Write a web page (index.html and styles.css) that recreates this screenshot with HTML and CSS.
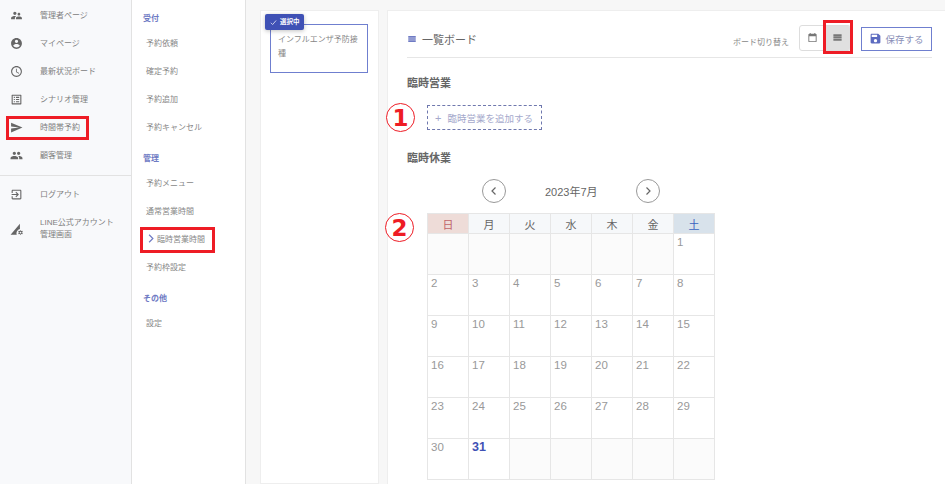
FILE: index.html
```html
<!DOCTYPE html>
<html>
<head>
  <meta charset="utf-8">
  <title>臨時営業時間</title>
  <link rel="stylesheet" href="styles.css">
</head>
<body>
  <div class="sidebar">
    <div class="side-item"><svg class="side-icon" viewBox="0 0 24 24"><path d="M16.5 12c1.38 0 2.49-1.12 2.49-2.5S17.88 7 16.5 7C15.12 7 14 8.12 14 9.5s1.12 2.5 2.5 2.5zM9 11c1.66 0 2.99-1.34 2.99-3S10.66 5 9 5C7.34 5 6 6.34 6 8s1.34 3 3 3zm7.5 3c-1.83 0-5.5.92-5.5 2.75V19h11v-2.25c0-1.83-3.67-2.75-5.5-2.75zM9 13c-2.33 0-7 1.17-7 3.5V19h7v-2.25c0-.85.33-2.34 2.37-3.47C10.5 13.1 9.66 13 9 13z"/></svg>管理者ページ</div>
    <div class="side-item"><svg class="side-icon" viewBox="0 0 24 24"><path d="M12 2C6.48 2 2 6.48 2 12s4.48 10 10 10 10-4.48 10-10S17.52 2 12 2zm0 3c1.66 0 3 1.34 3 3s-1.34 3-3 3-3-1.34-3-3 1.34-3 3-3zm0 14.2c-2.5 0-4.71-1.28-6-3.22.03-1.99 4-3.08 6-3.08 1.99 0 5.97 1.09 6 3.08-1.29 1.94-3.5 3.22-6 3.22z"/></svg>マイページ</div>
    <div class="side-item"><svg class="side-icon" viewBox="0 0 24 24"><path d="M11.99 2C6.47 2 2 6.48 2 12s4.47 10 9.99 10C17.52 22 22 17.52 22 12S17.52 2 11.99 2zM12 20c-4.42 0-8-3.58-8-8s3.58-8 8-8 8 3.58 8 8-3.58 8-8 8zm.5-13H11v6l5.25 3.15.75-1.23-4.5-2.67z"/></svg>最新状況ボード</div>
    <div class="side-item"><svg class="side-icon" viewBox="0 0 24 24"><path d="M19 5v14H5V5h14m1.1-2H3.9c-.5 0-.9.4-.9.9v16.2c0 .4.4.9.9.9h16.2c.4 0 .9-.5.9-.9V3.9c0-.5-.5-.9-.9-.9zM11 7h6v2h-6V7zm0 4h6v2h-6v-2zm0 4h6v2h-6zM7 7h2v2H7zm0 4h2v2H7zm0 4h2v2H7z"/></svg>シナリオ管理</div>
    <div class="side-item"><svg class="side-icon" viewBox="0 0 24 24"><path d="M2.01 21L23 12 2.01 3 2 10l15 2-15 2z"/></svg>時間帯予約</div>
    <div class="side-item"><svg class="side-icon" viewBox="0 0 24 24"><path d="M16 11c1.66 0 2.99-1.34 2.99-3S17.66 5 16 5c-1.66 0-3 1.34-3 3s1.34 3 3 3zm-8 0c1.66 0 2.99-1.34 2.99-3S9.66 5 8 5C6.34 5 5 6.34 5 8s1.34 3 3 3zm0 2c-2.33 0-7 1.17-7 3.5V19h14v-2.5c0-2.33-4.67-3.5-7-3.5zm8 0c-.29 0-.62.02-.97.05 1.16.84 1.97 1.97 1.97 3.45V19h6v-2.5c0-2.33-4.67-3.5-7-3.5z"/></svg>顧客管理</div>
    <div class="side-rule"></div>
    <div class="side-item"><svg class="side-icon" viewBox="0 0 24 24"><path d="M10.09 15.59L11.5 17l5-5-5-5-1.41 1.41L12.67 11H3v2h9.67l-2.58 2.59zM19 3H5c-1.11 0-2 .9-2 2v4h2V5h14v14H5v-4H3v4c0 1.1.89 2 2 2h14c1.1 0 2-.9 2-2V5c0-1.1-.9-2-2-2z"/></svg>ログアウト</div>
    <div class="side-item side-item-tall"><svg class="side-icon side-icon-line" viewBox="0 0 24 24"><path d="M1 22L17 3v9a7.5 7.5 0 0 0-5.5 10z"/><path fill-rule="evenodd" d="M18 13.5l1 1.8 2-.4.9 1.8-1.3 1.3 1.3 1.3-.9 1.8-2-.4-1 1.8-1-1.8-2 .4-.9-1.8 1.3-1.3-1.3-1.3.9-1.8 2 .4zM18 16.5a1.5 1.5 0 1 0 0 3 1.5 1.5 0 0 0 0-3z"/></svg><span>LINE公式アカウント<br>管理画面</span></div>
    <div class="mark mark-side"></div>
  </div>

  <div class="subnav">
    <div class="sub-head">受付</div>
    <div class="sub-item">予約依頼</div>
    <div class="sub-item">確定予約</div>
    <div class="sub-item">予約追加</div>
    <div class="sub-item">予約キャンセル</div>
    <div class="sub-head">管理</div>
    <div class="sub-item">予約メニュー</div>
    <div class="sub-item">通常営業時間</div>
    <div class="sub-item sub-current"><svg class="sub-arrow" viewBox="0 0 8 12"><path d="M1.5 1l5 5-5 5"/></svg>臨時営業時間</div>
    <div class="sub-item">予約枠設定</div>
    <div class="sub-head">その他</div>
    <div class="sub-item">設定</div>
    <div class="mark mark-sub"></div>
  </div>

  <div class="list-panel">
    <div class="scenario">
      インフルエンザ予防接種
      <div class="badge"><svg class="badge-check" viewBox="0 0 12 12"><path d="M1.5 6.5l3 3 6-7"/></svg>選択中</div>
    </div>
  </div>

  <div class="main-panel">
    <div class="board-head">
      <svg class="title-icon" viewBox="0 0 24 24"><path d="M3 5h18v4H3zM3 10h18v4H3zM3 15h18v4H3z"/></svg>
      <div class="board-title">一覧ボード</div>
      <div class="switch-label">ボード切り替え</div>
      <div class="switch">
        <div class="switch-btn"><svg class="switch-icon" viewBox="0 0 24 24"><path d="M19 4h-1V2h-2v2H8V2H6v2H5a2 2 0 0 0-2 2v14a2 2 0 0 0 2 2h14a2 2 0 0 0 2-2V6a2 2 0 0 0-2-2zm0 16H5V9h14v11z"/></svg></div>
        <div class="switch-btn switch-on"><svg class="switch-icon" viewBox="0 0 24 24"><path d="M3 5h18v4H3zM3 10h18v4H3zM3 15h18v4H3z"/></svg></div>
      </div>
      <div class="save-btn"><svg class="save-icon" viewBox="0 0 24 24"><path d="M17 3H5c-1.11 0-2 .9-2 2v14c0 1.1.89 2 2 2h14c1.1 0 2-.9 2-2V7l-4-4zm-5 16c-1.66 0-3-1.34-3-3s1.34-3 3-3 3 1.34 3 3-1.34 3-3 3zm3-10H5V5h10v4z"/></svg>保存する</div>
      <div class="mark mark-switch"></div>
    </div>

    <h2 class="section-title">臨時営業</h2>
    <div class="add-row">
      <div class="num-mark num-one">1</div>
      <div class="add-btn"><span class="add-plus">+</span>臨時営業を追加する</div>
    </div>

    <h2 class="section-title section-off">臨時休業</h2>
    <div class="month-nav">
      <div class="month-btn"><svg viewBox="0 0 8 12"><path d="M5.5 2.5L2 6l3.5 3.5"/></svg></div>
      <div class="month-label">2023年7月</div>
      <div class="month-btn"><svg viewBox="0 0 8 12"><path d="M2.5 2.5L6 6 2.5 9.5"/></svg></div>
    </div>

    <div class="cal-wrap">
      <div class="num-mark num-two">2</div>
      <div class="cal">
        <div class="cal-head cal-sun">日</div>
        <div class="cal-head">月</div>
        <div class="cal-head">火</div>
        <div class="cal-head">水</div>
        <div class="cal-head">木</div>
        <div class="cal-head">金</div>
        <div class="cal-head cal-sat">土</div>

        <div class="day day-empty"></div>
        <div class="day day-empty"></div>
        <div class="day day-empty"></div>
        <div class="day day-empty"></div>
        <div class="day day-empty"></div>
        <div class="day day-empty"></div>
        <div class="day">1</div>

        <div class="day">2</div><div class="day">3</div><div class="day">4</div><div class="day">5</div><div class="day">6</div><div class="day">7</div><div class="day">8</div>
        <div class="day">9</div><div class="day">10</div><div class="day">11</div><div class="day">12</div><div class="day">13</div><div class="day">14</div><div class="day">15</div>
        <div class="day">16</div><div class="day">17</div><div class="day">18</div><div class="day">19</div><div class="day">20</div><div class="day">21</div><div class="day">22</div>
        <div class="day">23</div><div class="day">24</div><div class="day">25</div><div class="day">26</div><div class="day">27</div><div class="day">28</div><div class="day">29</div>

        <div class="day">30</div>
        <div class="day day-today">31</div>
        <div class="day day-empty"></div>
        <div class="day day-empty"></div>
        <div class="day day-empty"></div>
        <div class="day day-empty"></div>
        <div class="day day-empty"></div>
      </div>
    </div>
  </div>
</body>
</html>
```

FILE: styles.css
```css
* {
  margin: 0;
  padding: 0;
  box-sizing: border-box;
}

body {
  font-family: 'Liberation Sans', 'Noto Sans CJK JP', sans-serif;
  background: #f7f7f7;
  width: 945px;
  height: 484px;
  overflow: hidden;
  display: flex;
  color: #777;
}

.sidebar {
  position: relative;
  width: 132px;
  height: 484px;
  background: #f8f9fb;
  border-right: 1px solid #e2e2e2;
}

.side-item {
  height: 28px;
  display: flex;
  align-items: center;
  gap: 17px;
  padding-left: 10px;
  font-size: 8px;
  color: #808080;
}

.side-item-tall {
  height: 44px;
  line-height: 12px;
}

.side-icon {
  width: 13px;
  height: 13px;
  margin-top: 2px;
  fill: #666;
  flex-shrink: 0;
}

.side-icon-line {
  width: 14px;
  height: 14px;
  margin-top: 0;
  margin-right: -1px;
}

.side-rule {
  height: 1px;
  margin: 7px 0 3px;
  background: #e2e2e2;
}

.mark {
  position: absolute;
  border: 3px solid #ee1c25;
}

.mark-side {
  left: 6px;
  top: 116px;
  width: 83px;
  height: 24px;
}

.mark-sub {
  left: 8px;
  top: 227px;
  width: 75px;
  height: 26px;
}

.mark-switch {
  left: 435px;
  top: 9px;
  width: 30px;
  height: 34px;
}

.subnav {
  position: relative;
  width: 114px;
  height: 484px;
  padding: 3px 0 0 11px;
  background: #fff;
  border-right: 1px solid #e2e2e2;
}

.sub-head {
  height: 28px;
  display: flex;
  align-items: center;
  font-size: 8px;
  font-weight: bold;
  color: #6f7bc4;
}

.sub-item {
  height: 28px;
  display: flex;
  align-items: center;
  padding-left: 3px;
  font-size: 8px;
  color: #888;
}

.sub-item + .sub-head {
  margin-top: 3px;
}

.sub-head + .sub-item {
  margin-top: -3px;
}

.sub-current {
  padding-left: 5px;
}

.sub-arrow {
  width: 6px;
  height: 9px;
  margin-right: 3px;
  fill: none;
  stroke: #6f7bc4;
  stroke-width: 1.6;
}

.list-panel {
  width: 119px;
  height: 474px;
  margin: 10px 0 0 14px;
  padding: 13px 9px;
  background: #fff;
  border: 1px solid #eee;
}

.scenario {
  position: relative;
  width: 98px;
  height: 49px;
  padding: 8px 7px;
  border: 1px solid #6f7fcf;
  font-size: 8px;
  line-height: 14px;
  color: #888;
}

.badge {
  position: absolute;
  left: -6px;
  top: -11px;
  width: 39px;
  height: 16px;
  display: flex;
  align-items: center;
  gap: 3px;
  padding-left: 5px;
  background: #3f51b5;
  border-radius: 2px;
  box-shadow: 0 1px 4px rgba(0,0,0,0.25);
  font-size: 6.5px;
  font-weight: bold;
  color: #fff;
}

.badge-check {
  width: 7px;
  height: 7px;
  fill: none;
  stroke: #fff;
  stroke-width: 1.2;
}

.main-panel {
  position: relative;
  width: 558px;
  height: 474px;
  margin: 10px 0 0 8px;
  padding: 0 13px 0 19px;
  background: #fff;
  border-left: 1px solid #eee;
  border-top: 1px solid #eee;
}

.board-head {
  height: 47px;
  display: flex;
  align-items: center;
  padding-top: 7px;
  border-bottom: 1px solid #e6e6e6;
}

.title-icon {
  width: 10px;
  height: 10px;
  margin: 3px 5px 0 0;
  fill: #6f7bc4;
}

.board-title {
  flex: 1;
  margin-top: 3px;
  font-size: 11px;
  color: #666;
}

.switch-label {
  margin: 8px 10px 0 0;
  font-size: 8px;
  color: #888;
}

.switch {
  display: flex;
  width: 52px;
  height: 26px;
  margin-right: 10px;
  border: 1px solid #ddd;
  border-radius: 3px;
  overflow: hidden;
}

.switch-btn {
  flex: 1;
  display: flex;
  align-items: center;
  justify-content: center;
}

.switch-on {
  background: #e0e0e0;
}

.switch-icon {
  width: 11px;
  height: 11px;
  fill: #777;
}

.save-btn {
  width: 71px;
  height: 24px;
  margin-top: 2px;
  display: flex;
  align-items: center;
  justify-content: center;
  gap: 3px;
  border: 1px solid #6f7fcf;
  font-size: 9.5px;
  color: #8a8fb8;
}

.save-icon {
  width: 13px;
  height: 13px;
  fill: #5c6bc0;
}

.section-title {
  margin-top: 17px;
  height: 16px;
  line-height: 16px;
  font-size: 11px;
  font-weight: bold;
  color: #666;
}

.section-off {
  margin-top: 20px;
}

.add-row {
  position: relative;
  padding: 14px 0 0 20px;
}

.add-btn {
  width: 115px;
  height: 25px;
  display: flex;
  align-items: center;
  padding-left: 7px;
  border: 1px dashed #6f78ae;
  font-size: 9.5px;
  color: #a5a9cc;
}

.add-plus {
  margin-right: 6px;
  font-size: 11px;
}

.num-mark {
  position: absolute;
  width: 29px;
  height: 29px;
  display: flex;
  align-items: center;
  justify-content: center;
  background: #fff;
  border: 1px solid #ee1c25;
  border-radius: 50%;
  font-family: 'DejaVu Sans', sans-serif;
  font-size: 23px;
  font-weight: bold;
  color: #ee1c25;
}

.num-one {
  left: -21px;
  top: 12px;
}

.num-two {
  left: -42px;
  top: 0;
}

.month-nav {
  display: flex;
  align-items: center;
  justify-content: center;
  gap: 38px;
  width: 288px;
  margin: 13px 0 10px 20px;
  height: 24px;
}

.month-btn {
  width: 24px;
  height: 24px;
  display: flex;
  align-items: center;
  justify-content: center;
  border: 1px solid #999;
  border-radius: 50%;
}

.month-btn svg {
  width: 8px;
  height: 12px;
  fill: none;
  stroke: #666;
  stroke-width: 1.2;
}

.month-label {
  width: 54px;
  padding-left: 1px;
  font-size: 11px;
  white-space: nowrap;
  color: #666;
}

.cal-wrap {
  position: relative;
  margin-left: 20px;
}

.cal {
  display: grid;
  grid-template-columns: repeat(7, 40px);
  grid-template-rows: 19px repeat(6, 40px);
  gap: 1px;
  width: 288px;
  padding: 1px;
  background: #e6e6e6;
}

.cal-head {
  display: flex;
  align-items: center;
  justify-content: center;
  background: #f6f8fa;
  font-size: 11px;
  color: #666;
}

.cal-sun {
  background: #eedcd8;
  color: #c0646a;
}

.cal-sat {
  background: #d8e2eb;
  color: #3a62c0;
}

.day {
  padding: 1px 3px;
  background: #fff;
  font-size: 11.5px;
  line-height: 14px;
  color: #999;
}

.day-empty {
  background: #fbfbfb;
}

.day-today {
  font-size: 12.5px;
  font-weight: bold;
  color: #3f51b5;
}
```
